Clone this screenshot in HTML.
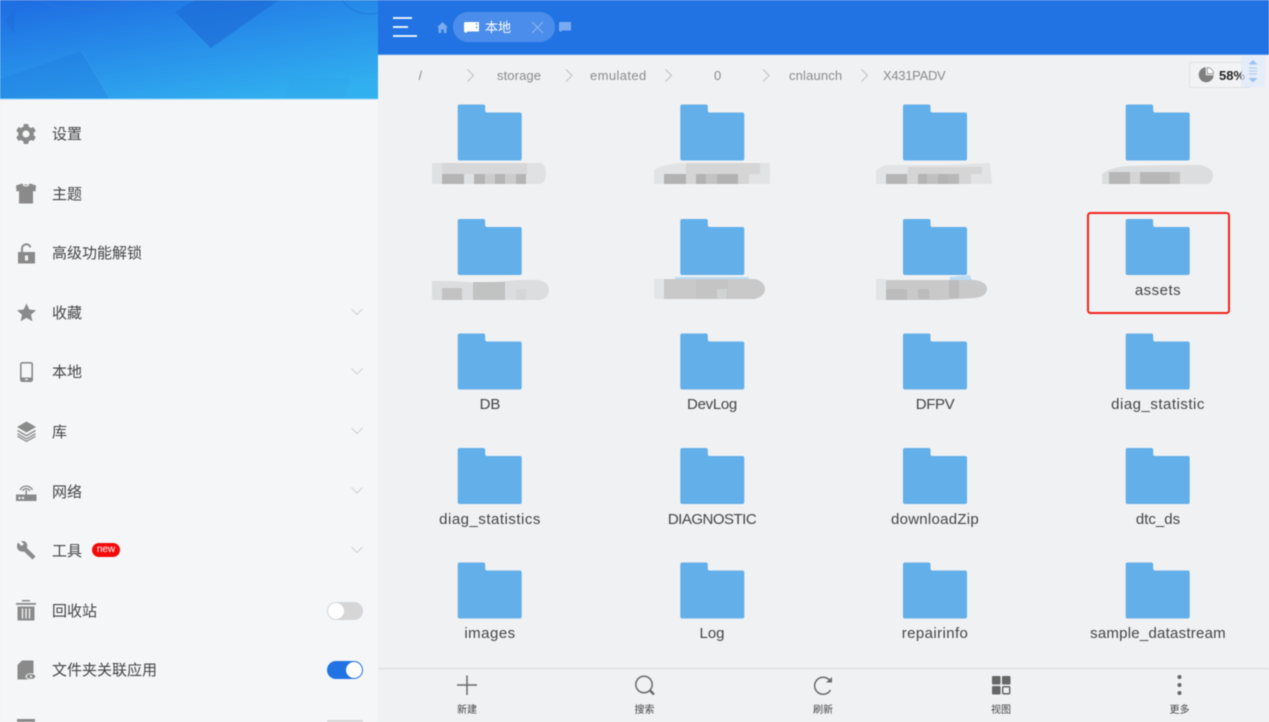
<!DOCTYPE html>
<html><head><meta charset="utf-8"><style>
html,body{margin:0;padding:0;width:1269px;height:722px;overflow:hidden;background:#f0f1f3}
body{font-family:"Liberation Sans","Noto Sans CJK SC",sans-serif;color:#444}
#w{position:absolute;left:0;top:0;width:1269px;height:722px;overflow:hidden;filter:blur(.45px)}
.a{position:absolute;white-space:nowrap}
svg{position:absolute;overflow:visible}
.m{left:52px;font-size:15px;line-height:20px;color:#444}
.l{font-size:15px;line-height:20px;width:220px;text-align:center;color:#444}
.b{font-size:13px;line-height:16px;color:#8b8b8b;top:67.500px}
.t{font-size:10px;line-height:12px;width:60px;text-align:center;color:#444;top:705px}
</style></head><body><div id="w">
<div class="a" style="left:0;top:0;width:378px;height:722px;background:#f5f6f8"></div>
<div class="a" style="left:378px;top:55px;width:891px;height:667px;background:#f0f1f3"></div>
<svg style="left:0;top:0" width="378" height="100" viewBox="0 0 378 100">
<defs><linearGradient id="g" x1="0.12" y1="0" x2="0.75" y2="1"><stop offset="0" stop-color="#1f6fe3"/><stop offset="1" stop-color="#31b0f0"/></linearGradient></defs>
<rect width="378" height="98.500" fill="url(#g)"/>
<path d="M175 12L195 0H279L211 48Z" fill="#1d69d6" opacity=".6"/>
<path d="M0 79L82 51L110 99H0Z" fill="#1f78dc" opacity=".3"/>
<path d="M82 51L110 99" stroke="#4fa6ee" stroke-width="1" fill="none" opacity=".4"/>
<path d="M285 98L290 78H350L345 98Z" fill="#2ea2e8" opacity=".3"/>
<path d="M5 20L15 10L14 34Z" fill="#1b62cf" opacity=".3"/>
<path d="M40 0C60 12 110 12 140 0" stroke="#2a78dc" stroke-width="2" fill="none" opacity=".5"/>
<path d="M342 0C350 12 365 16 378 13" stroke="#1f6bd3" stroke-width="1" fill="none" opacity=".6"/>
<rect y="98.500" width="378" height="1" fill="#8fd2f6"/>
</svg>
<div class="a" style="left:378px;top:0;width:891px;height:54.500px;background:#2173e4"></div>
<div class="a" style="left:378px;top:54px;width:891px;height:1px;background:#4f91ea"></div>

<!-- sidebar icons -->
<svg style="left:16px;top:124px" width="20" height="20" viewBox="0 0 20 20"><g fill="#8a8a8a"><circle cx="10" cy="10" r="7.800"/><rect x="7.500" y="0" width="5" height="4" rx="1"/><rect x="7.500" y="16" width="5" height="4" rx="1"/><rect x="7.500" y="0" width="5" height="4" rx="1" transform="rotate(60 10 10)"/><rect x="7.500" y="16" width="5" height="4" rx="1" transform="rotate(60 10 10)"/><rect x="7.500" y="0" width="5" height="4" rx="1" transform="rotate(120 10 10)"/><rect x="7.500" y="16" width="5" height="4" rx="1" transform="rotate(120 10 10)"/></g><circle cx="10" cy="10" r="3.500" fill="#f5f6f8"/></svg>
<svg style="left:16px;top:183px" width="20" height="21" viewBox="0 0 20 21"><path fill="#8a8a8a" d="M6 0.500C7 2 13 2 14 .5L20 2.500 19.500 8.500 17 8V20.500H3V8L.5 8.500 0 2.500z"/><path d="M7 1.500C8 3.500 12 3.500 13 1.500" stroke="#f5f6f8" fill="none"/></svg>
<svg style="left:17px;top:243px" width="19" height="21" viewBox="0 0 19 21"><path fill="#8a8a8a" d="M1 9h17v11.500H1z"/><path d="M5 9V5.500a4.300 4.300 0 0 1 8.400-1.200" stroke="#8a8a8a" stroke-width="2" fill="none"/><rect x="8" y="12.500" width="3" height="5" fill="#f5f6f8"/></svg>
<svg style="left:17px;top:303px" width="19" height="19" viewBox="0 0 19 19"><path fill="#8a8a8a" d="M9.500.5l2.800 6 6.700.7-5 4.500 1.400 6.600-5.900-3.400-5.900 3.400 1.400-6.600-5-4.500 6.700-.7z"/></svg>
<svg style="left:20px;top:362px" width="13" height="20" viewBox="0 0 13 20"><rect x=".8" y=".8" width="11.400" height="18.400" rx="1.500" fill="none" stroke="#8a8a8a" stroke-width="1.600"/><rect x="1" y="15.500" width="11" height="4" fill="#8a8a8a"/><rect x="5" y="16.800" width="3" height="1.200" fill="#f5f6f8"/></svg>
<svg style="left:17px;top:421px" width="19" height="21" viewBox="0 0 19 21"><path fill="#8a8a8a" d="M9.500.5L19 6 9.500 11.500 0 6z"/><path d="M.5 9.500l9 5.200 9-5.200M.5 12.700l9 5.200 9-5.200M.5 15.200l9 5.200 9-5.200" fill="none" stroke="#8a8a8a" stroke-width="1.300"/></svg>
<svg style="left:16px;top:482px" width="21" height="19" viewBox="0 0 21 19"><path fill="#8a8a8a" d="M0 12.500h20.500V19H0z"/><rect x="2.500" y="15" width="2" height="2" fill="#f5f6f8"/><rect x="6" y="15" width="2" height="2" fill="#f5f6f8"/><path d="M4 8a7 7 0 0 1 12.500 0M6.500 9a4.200 4.200 0 0 1 7.500 0" fill="none" stroke="#8a8a8a" stroke-width="1.300"/><rect x="9.500" y="8" width="1.500" height="5" fill="#8a8a8a"/></svg>
<svg style="left:17px;top:541px" width="19" height="19" viewBox="0 0 19 19"><path fill="#8a8a8a" d="M1 1.500L4.500 5 7 3 4 .3C7-.7 10 1 10.300 4.500L10 7 18.500 15.500 15.500 18.500 7 10.500C3.500 11.300 0 9 0 5.500 0 4 .3 2.500 1 1.500z"/></svg>
<svg style="left:16px;top:600px" width="20" height="21" viewBox="0 0 20 21"><rect x="6" y="0" width="8" height="1.500" fill="#8a8a8a"/><rect x="0" y="3" width="20" height="1.800" fill="#8a8a8a"/><path fill="#8a8a8a" d="M1.500 6.500h17V20.500h-17z"/><path d="M6.500 8.500V18.500M10 8.500V18.500M13.500 8.500V18.500" stroke="#f5f6f8" stroke-width="1.300"/></svg>
<svg style="left:17px;top:660px" width="20" height="20" viewBox="0 0 20 20"><path fill="#8a8a8a" d="M5 .5h11.500V19.500H.5V5z"/><ellipse cx="14" cy="16.500" rx="5.500" ry="3.200" fill="#f5f6f8"/><ellipse cx="14" cy="16.500" rx="4.300" ry="2.400" fill="#8a8a8a"/><circle cx="14" cy="16.500" r="1.100" fill="#f5f6f8"/></svg>
<div class="a" style="left:17px;top:719px;width:18px;height:3px;background:#8a8a8a"></div>

<div class="a m" style="top:125px">设置</div>
<div class="a m" style="top:185px">主题</div>
<div class="a m" style="top:244px">高级功能解锁</div>
<div class="a m" style="top:304px">收藏</div>
<div class="a m" style="top:363px">本地</div>
<div class="a m" style="top:423px">库</div>
<div class="a m" style="top:483px">网络</div>
<div class="a m" style="top:542px">工具</div>
<div class="a m" style="top:602px">回收站</div>
<div class="a m" style="top:661px">文件夹关联应用</div>

<div class="a" style="left:92px;top:543px;width:28px;height:14px;border-radius:7px;background:#f40a0a;color:#fff;font-size:10px;line-height:14px;text-align:center">new</div>
<svg style="left:351px;top:309px" width="12" height="250" viewBox="0 0 12 250" fill="none" stroke="#cfd0d2" stroke-width="1"><path d="M.5 0L6 5.500 11.500 0M.5 59.500L6 65 11.500 59.500M.5 119L6 124.500 11.500 119M.5 178.500L6 184 11.500 178.500M.5 238L6 243.500 11.500 238"/></svg>
<div class="a" style="left:327px;top:601.500px;width:36px;height:18px;border-radius:9px;background:#d6d6d7"></div>
<div class="a" style="left:328px;top:602.500px;width:16px;height:16px;border-radius:8px;background:#fff"></div>
<div class="a" style="left:327px;top:661px;width:36px;height:18px;border-radius:9px;background:#2173e4"></div>
<div class="a" style="left:346px;top:662px;width:16px;height:16px;border-radius:8px;background:#fff"></div>
<div class="a" style="left:327px;top:720px;width:36px;height:2px;border-radius:9px 9px 0 0;background:#d6d6d7"></div>

<!-- top bar -->
<svg style="left:393px;top:17px" width="25" height="21" viewBox="0 0 25 21" fill="none" stroke="#fff" stroke-width="1.800"><path d="M0 1H19M0 10H15M0 19H24"/></svg>
<svg style="left:437px;top:22px" width="11" height="11" viewBox="0 0 11 11"><path fill="#7aaaf0" d="M5.500 0L11 5.500H9.500V11H6.800V7.500H4.200V11H1.500V5.500H0z"/></svg>
<div class="a" style="left:453px;top:12px;width:102px;height:30px;border-radius:15px;background:#4b8dea"></div>
<svg style="left:464px;top:22px" width="15" height="11" viewBox="0 0 15 11"><path fill="#fff" d="M1 0H15V9.500H3.500L2 11 0 9.500V1z"/><path d="M12.500 1V3M12.500 4.500V6.500" stroke="#4b8dea" stroke-width="1"/></svg>
<div class="a" style="left:485px;top:19px;font-size:13px;line-height:18px;color:#fff">本地</div>
<svg style="left:532px;top:22px" width="11" height="11" viewBox="0 0 11 11" stroke="#8fb6f1" stroke-width="1.100" fill="none"><path d="M0 0L11 11M11 0L0 11"/></svg>
<svg style="left:559px;top:22px" width="12" height="10" viewBox="0 0 12 10"><path fill="#7aaaf0" d="M1 0H12V8.500H3L1.500 10 0 8.500V1z"/></svg>

<!-- breadcrumb -->
<div class="a b" style="left:418.500px">/</div>
<div class="a b" style="left:497px;letter-spacing:.1px">storage</div>
<div class="a b" style="left:590px;letter-spacing:.4px">emulated</div>
<div class="a b" style="left:714px">0</div>
<div class="a b" style="left:789px;letter-spacing:.15px">cnlaunch</div>
<div class="a b" style="left:883px;letter-spacing:-.3px">X431PADV</div>
<svg style="left:466.500px;top:69px" width="402" height="13" viewBox="0 0 402 13" fill="none" stroke="#c3c4c6" stroke-width="1.200"><path d="M.5.500L6.500 6.500.5 12.500M99 .5L105 6.500 99 12.500M198.500.5L204.500 6.500 198.500 12.500M296 .5L302 6.500 296 12.500M394.500.5L400.500 6.500 394.500 12.500"/></svg>

<div class="a" style="left:1189px;top:62px;width:60px;height:24px;background:#f2f3f5;border:1px solid #e0e1e3;border-radius:2px"></div>
<svg style="left:1199px;top:67px" width="15" height="15" viewBox="0 0 15 15"><path fill="#7f7f7f" d="M6.800.3v7.900h7.900A7.500 7.500 0 1 1 6.800.3z"/><path d="M8.300.5A6.500 6.500 0 0 1 14.500 6.700H8.300z" fill="#fff" stroke="#8a8a8a" stroke-width=".8"/></svg>
<div class="a" style="left:1219px;top:68px;font-size:13px;line-height:16px;font-weight:bold;color:#222">58%</div>
<div class="a" style="left:1241px;top:56px;width:24px;height:31px;background:rgba(226,235,250,.75);border-radius:2px"></div>
<svg style="left:1248px;top:60px" width="10" height="23" viewBox="0 0 10 23"><path fill="#9dc0f2" d="M5 0L9.500 4.500H.5zM.5 18H9.500L5 22.500z"/><path d="M1 8H9M1 11H9M1 14H9" stroke="#a9c6f1" stroke-width=".9"/></svg>

<!-- folders -->
<svg style="left:0;top:0;position:absolute" width="1269" height="722" viewBox="0 0 1269 722">
<defs><path id="f" fill="#63afe9" d="M2 0H25.500a2 2 0 0 1 2 2V6a2 2 0 0 0 2 2H62a2 2 0 0 1 2 2V54a2 2 0 0 1-2 2H2a2 2 0 0 1-2-2V2a2 2 0 0 1 2-2z"/></defs>
<use href="#f" x="457.700" y="104.500"/><use href="#f" x="680.300" y="104.500"/><use href="#f" x="903" y="104.500"/><use href="#f" x="1125.700" y="104.500"/>
<use href="#f" x="457.700" y="219"/><use href="#f" x="680.300" y="219"/><use href="#f" x="903" y="219"/><use href="#f" x="1125.700" y="219"/>
<use href="#f" x="457.700" y="333.500"/><use href="#f" x="680.300" y="333.500"/><use href="#f" x="903" y="333.500"/><use href="#f" x="1125.700" y="333.500"/>
<use href="#f" x="457.700" y="448"/><use href="#f" x="680.300" y="448"/><use href="#f" x="903" y="448"/><use href="#f" x="1125.700" y="448"/>
<use href="#f" x="457.700" y="562.500"/><use href="#f" x="680.300" y="562.500"/><use href="#f" x="903" y="562.500"/><use href="#f" x="1125.700" y="562.500"/>

<!-- mosaics row 1 -->
<path fill="#e0e1e3" d="M432 163H540a6 10 0 0 1 6 10v1a7 10 0 0 1-7 10H432z"/>
<g fill="#b4b4b4"><rect x="442" y="174" width="22" height="10"/><rect x="474" y="174" width="11" height="10"/><rect x="495" y="174" width="10" height="10"/><rect x="516" y="174" width="10" height="10"/></g>
<g fill="#cbcbcc"><rect x="485" y="174" width="10" height="10"/><rect x="505" y="174" width="11" height="10"/><rect x="442" y="163" width="85" height="11" opacity=".45"/></g>
<path fill="#e2e3e5" d="M654 184V170Q660 165 680 163H770V184z"/>
<g fill="#d5d5d6"><rect x="686" y="163" width="74" height="11"/><rect x="665" y="174" width="84" height="10"/></g>
<g fill="#b2b2b2"><rect x="664" y="174" width="22" height="10"/><rect x="696" y="174" width="10" height="10"/><rect x="717" y="174" width="21" height="10"/></g><rect x="706" y="174" width="11" height="10" fill="#c3c3c3"/>
<path fill="#e2e3e5" d="M876 184V170L885 165H940L990 163L992 184z"/>
<g fill="#d5d5d6"><rect x="908" y="167" width="74" height="7"/><rect x="897" y="174" width="74" height="10"/></g>
<g fill="#b4b4b4"><rect x="886" y="174" width="21" height="10"/><rect x="918" y="174" width="9" height="10"/><rect x="938" y="174" width="10" height="10"/><rect x="927" y="174" width="11" height="10" fill="#c0c0c0"/><rect x="948" y="174" width="11" height="10" fill="#b8b8b8"/></g>
<path fill="#dcddde" d="M1102 184V174Q1110 167 1130 166L1170 165 1200 165Q1213 168 1213 175 1213 181 1208 184z"/>
<g fill="#b7b7b7"><rect x="1109" y="172" width="21" height="12"/><rect x="1140" y="172" width="30" height="12"/><rect x="1170" y="172" width="10" height="12" fill="#c2c2c2"/><rect x="1130" y="172" width="10" height="12" fill="#d5d5d6"/></g>

<!-- mosaics row 2 -->
<path fill="#dcddde" d="M432 281H452L480 283 520 280H538Q549 282 549 290 549 298 540 300H432z"/>
<g fill="#c3c3c3"><rect x="442" y="288" width="20" height="12"/><rect x="473" y="282" width="32" height="18" opacity=".95" fill="#bfc0c0"/><rect x="516" y="289" width="10" height="11" fill="#d5d6d6"/></g>
<path d="M675 277H749V280H675z" fill="#bcdcf4"/>
<path fill="#c9c9ca" d="M654 279H755Q765 282 765 289 765 296 755 299H654z"/>
<g fill="#e3e4e5"><rect x="654" y="279" width="10" height="20"/><rect x="717" y="289" width="10" height="10"/></g><rect x="696" y="279" width="32" height="20" fill="#bfbfbf" opacity=".5"/>
<path d="M950 277L970 275 972 281H950z" fill="#bcdcf4"/>
<path fill="#c9c9ca" d="M876 280H975Q987 282 987 289 987 296 975 298L940 300H876z"/>
<g fill="#e3e4e5"><rect x="876" y="279" width="10" height="21"/></g><g fill="#bcbcbc"><rect x="886" y="289" width="21" height="11"/><rect x="918" y="289" width="11" height="10"/><rect x="949" y="280" width="10" height="18"/></g>

<!-- red box -->
<rect x="1088" y="213" width="141" height="100" rx="2.500" fill="none" stroke="#f2231c" stroke-width="2"/>
<!-- bottom bar -->
<rect x="378" y="668" width="891" height="1.200" fill="#dcdde0"/>
<path d="M457 685H477M467 675.500V695" stroke="#6a6a6a" stroke-width="1.500" fill="none"/>
<circle cx="644" cy="684.500" r="8.200" fill="none" stroke="#6a6a6a" stroke-width="1.500"/><path d="M650 690.500L654 694.500" stroke="#6a6a6a" stroke-width="2.500"/>
<path d="M830.500 681.500A8.500 8.500 0 1 0 830.500 690" fill="none" stroke="#6a6a6a" stroke-width="1.500"/><path d="M826 682.500H832V677z" fill="#6a6a6a"/>
<g fill="#666"><rect x="992" y="676" width="8.500" height="8.500" rx="1"/><rect x="1002" y="676" width="8.500" height="8.500" rx="1"/><rect x="992" y="686" width="8.500" height="8.500" rx="1"/></g><rect x="1002.700" y="686.700" width="7" height="7" rx="1" fill="none" stroke="#666" stroke-width="1.500"/>
<g fill="#666"><circle cx="1179.500" cy="677" r="2"/><circle cx="1179.500" cy="685" r="2"/><circle cx="1179.500" cy="693" r="2"/></g>
</svg>

<div class="a l" style="left:1048px;top:281px;letter-spacing:.5px">assets</div>
<div class="a l" style="left:380px;top:395px">DB</div>
<div class="a l" style="left:602px;top:395px;letter-spacing:-.3px">DevLog</div>
<div class="a l" style="left:825px;top:395px;letter-spacing:-.4px">DFPV</div>
<div class="a l" style="left:1048px;top:395px;letter-spacing:.5px">diag_statistic</div>
<div class="a l" style="left:380px;top:510px;letter-spacing:.5px">diag_statistics</div>
<div class="a l" style="left:602px;top:510px;letter-spacing:-.5px">DIAGNOSTIC</div>
<div class="a l" style="left:825px;top:510px;letter-spacing:.27px">downloadZip</div>
<div class="a l" style="left:1048px;top:510px">dtc_ds</div>
<div class="a l" style="left:380px;top:624px;letter-spacing:.5px">images</div>
<div class="a l" style="left:602px;top:624px">Log</div>
<div class="a l" style="left:825px;top:624px;letter-spacing:.4px">repairinfo</div>
<div class="a l" style="left:1048px;top:624px;letter-spacing:.24px">sample_datastream</div>

<div class="a t" style="left:437px">新建</div>
<div class="a t" style="left:614.500px">搜索</div>
<div class="a t" style="left:793px">刷新</div>
<div class="a t" style="left:971px">视图</div>
<div class="a t" style="left:1149.500px">更多</div>
</div></body></html>
